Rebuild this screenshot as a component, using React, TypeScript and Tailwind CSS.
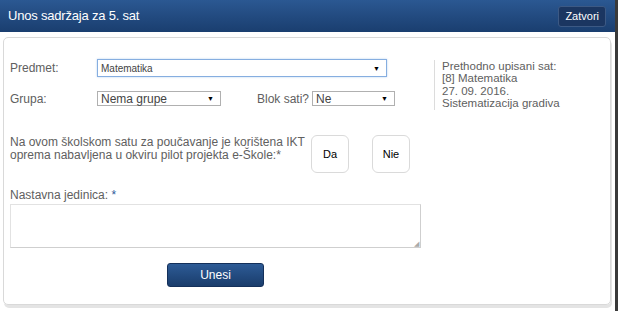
const Arrow = () => <span className="text-[7px] text-black leading-none">▼</span>;

const App = () => {
  return (
    <div className="w-[618px] h-[311px] bg-white flex font-['Liberation_Sans',Arial,sans-serif] text-[#606060] overflow-hidden">
      <div className="flex-1 flex flex-col">
        <div className="h-[32px] bg-gradient-to-b from-[#2b5892] to-[#1a3e6f] flex items-center justify-between pl-[8px] pr-[9px]">
          <span className="text-white text-[13px] tracking-[-0.2px]">Unos sadržaja za 5. sat</span>
          <button className="h-[21px] px-[6px] rounded-[3px] bg-[#1b3661] border border-[#3c5984] text-white text-[11px]">
            Zatvori
          </button>
        </div>
        <div className="ml-[3px] mr-[4px] mt-[5px] h-[268px] border border-[#d9d9d9] rounded-[5px] shadow-[1px_3px_0_#e4e4e4] pl-[6px] pt-[21px] text-[12px]">
          <div className="flex">
            <div className="w-[421px]">
              <div className="flex items-center h-[18px]">
                <span className="w-[87px]">Predmet:</span>
                <div className="w-[290px] h-[18px] border border-[#86aee0] shadow-[0_0_2px_#b9d2f0] flex items-center justify-between pl-[3px] pr-[6px] text-[10px] text-[#444]">
                  <span>Matematika</span>
                  <Arrow />
                </div>
              </div>
              <div className="flex items-center h-[15px] mt-[14px]">
                <span className="w-[87px]">Grupa:</span>
                <div className="w-[124px] h-[15px] border border-[#b0b0b0] flex items-center justify-between pl-[3px] pr-[6px] text-[#444]">
                  <span>Nema grupe</span>
                  <Arrow />
                </div>
                <span className="ml-[36px] w-[55px]">Blok sati?</span>
                <div className="w-[83px] h-[15px] border border-[#b0b0b0] flex items-center justify-between pl-[3px] pr-[6px] text-[#444]">
                  <span>Ne</span>
                  <Arrow />
                </div>
              </div>
            </div>
            <div className="ml-[3px] mt-[1px] h-[50px] border-l border-[#dcdcdc] pl-[7px] leading-[12.4px] text-[11.5px]">
              <div>Prethodno upisani sat:</div>
              <div>[8] Matematika</div>
              <div>27. 09. 2016.</div>
              <div>Sistematizacija gradiva</div>
            </div>
          </div>
          <div className="flex mt-[25px]">
            <div className="w-[301px] leading-[13px] mt-[1px]">
              <div>Na ovom školskom satu za poučavanje je korištena IKT</div>
              <div>oprema nabavljena u okviru pilot projekta e-Škole:*</div>
            </div>
            <div className="flex gap-[23px]">
              <button className="w-[38px] h-[38px] rounded-[6px] border border-[#dadada] text-black text-[11px]">Da</button>
              <button className="w-[38px] h-[38px] rounded-[6px] border border-[#dadada] text-black text-[11px]">Nie</button>
            </div>
          </div>
          <div className="mt-[16px] leading-[13px]">
            Nastavna jedinica: <span className="text-[#2d5b9a]">*</span>
          </div>
          <div className="mt-[2px] w-[411px] h-[44px] border border-[#cfcfcf] border-t-[#e2e2e2] border-l-[#e2e2e2] relative">
            <span className="absolute right-[1px] bottom-[0px] text-[7px] text-[#aaa] leading-none">◢</span>
          </div>
          <div className="w-[411px] flex justify-center mt-[15px]">
            <button className="w-[97px] h-[24px] rounded-[3px] bg-gradient-to-b from-[#2d5b96] to-[#1a3d6c] border border-[#14305a] text-white text-[12px]">
              Unesi
            </button>
          </div>
        </div>
      </div>
      <div className="w-[3px] bg-[#3a3a3a]" />
    </div>
  );
};

export default App;
